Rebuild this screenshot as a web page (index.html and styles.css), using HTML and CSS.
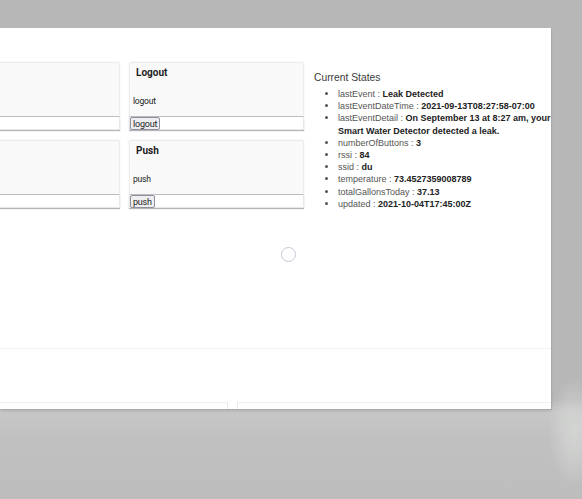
FILE: index.html
```html
<!DOCTYPE html>
<html>
<head>
<meta charset="utf-8">
<link rel="stylesheet" href="styles.css">
</head>
<body>
<div class="backdrop">
  <div class="panel">
    <div class="main">
      <div class="cards">
        <div class="card">
          <div class="card-head"><div class="card-title">&nbsp;</div><div class="card-cmd">&nbsp;</div></div>
          <div class="card-input"></div>
        </div>
        <div class="card">
          <div class="card-head"><div class="card-title">Logout</div><div class="card-cmd">logout</div></div>
          <div class="card-input"><button class="btn">logout</button></div>
        </div>
        <div class="card">
          <div class="card-head"><div class="card-title">&nbsp;</div><div class="card-cmd">&nbsp;</div></div>
          <div class="card-input"></div>
        </div>
        <div class="card">
          <div class="card-head"><div class="card-title">Push</div><div class="card-cmd">push</div></div>
          <div class="card-input"><button class="btn">push</button></div>
        </div>
      </div>
      <div class="states">
        <div class="states-title">Current States</div>
        <ul class="state-list">
          <li>lastEvent : <b>Leak Detected</b></li>
          <li>lastEventDateTime : <b>2021-09-13T08:27:58-07:00</b></li>
          <li>lastEventDetail : <b>On September 13 at 8:27 am, your Smart Water Detector detected a leak.</b></li>
          <li>numberOfButtons : <b>3</b></li>
          <li>rssi : <b>84</b></li>
          <li>ssid : <b>du</b></li>
          <li>temperature : <b>73.4527359008789</b></li>
          <li>totalGallonsToday : <b>37.13</b></li>
          <li>updated : <b>2021-10-04T17:45:00Z</b></li>
        </ul>
      </div>
    </div>
    <div class="spinner-row"><div class="spinner"></div></div>
    <div class="section">
      <div class="section-cards">
        <div class="section-card"></div>
        <div class="section-card"></div>
      </div>
    </div>
  </div>
</div>
</body>
</html>
```

FILE: styles.css
```css
html, body {
  margin: 0;
  padding: 0;
}
body {
  width: 582px;
  height: 499px;
  overflow: hidden;
  background: #b8b9b8;
  font-family: "Liberation Sans", Arial, sans-serif;
}
.backdrop {
  height: 499px;
  padding-top: 28px;
  box-sizing: border-box;
  background:
    radial-gradient(ellipse 26px 55px at 574px 432px, rgba(214,216,214,0.85) 0%, rgba(214,216,214,0.5) 50%, rgba(214,216,214,0) 100%),
    linear-gradient(#b6b7b6 0px, #b6b7b6 400px, #c6c7c6 412px, #bfc0bf 440px, #bcbdbc 499px);
}
.panel {
  width: 551px;
  height: 381px;
  background: #ffffff;
  box-shadow: 1px 1px 0 #a9aaa9, 0 2px 3px rgba(0,0,0,0.12);
  display: flex;
  flex-direction: column;
  overflow: hidden;
}
.main {
  display: flex;
  padding-top: 34px;
  height: 175px;
  box-sizing: border-box;
}
.cards {
  display: grid;
  grid-template-columns: 175px 175px;
  column-gap: 9px;
  row-gap: 9px;
  margin-left: -55px;
  width: 359px;
  flex: none;
  align-content: start;
}
.card {
  height: 69px;
  display: flex;
  flex-direction: column;
}
.card-head {
  height: 55px;
  background: #f9f9f9;
  border: 1px solid #ececec;
  border-bottom: 1px solid #bdbdbd;
  box-sizing: border-box;
  border-radius: 2px 2px 0 0;
  font-family: Roboto, "Liberation Sans", sans-serif;
  color: #222;
  box-shadow: 0 0 2px rgba(0,0,0,0.08);
}
.card-title {
  font-weight: bold;
  font-size: 10px;
  padding: 4px 0 0 6px;
  height: 24px;
  box-sizing: border-box;
}
.card-cmd {
  font-size: 8.5px;
  padding: 9px 0 0 3px;
  letter-spacing: -0.2px;
}
.card-input {
  height: 13px;
  background: #fff;
  border: 1px solid #e8e8e8;
  border-top: none;
  box-sizing: border-box;
  box-shadow: 0 1px 1px #b5b5b5;
  display: flex;
  align-items: stretch;
}
.btn {
  margin: 0;
  padding: 0 2px;
  font-family: Roboto, "Liberation Sans", sans-serif;
  font-size: 9px;
  letter-spacing: -0.2px;
  color: #222;
  background: #efeff1;
  border: 1px solid #8f8f9d;
  border-radius: 2px;
  height: 13px;
  line-height: 10px;
}
.states {
  margin-left: 10px;
  padding-top: 10px;
  color: #333;
  font-size: 9px;
  flex: 1;
  min-width: 0;
}
.states-title {
  font-size: 10.3px;
  color: #3a3a3a;
  line-height: 12px;
}
.state-list {
  margin: 4px 0 0 0;
  padding-left: 24px;
  line-height: 12.2px;
  color: #555;
}
.state-list li::marker {
  font-size: 10px;
}
.state-list b {
  color: #222;
  font-weight: bold;
}
.spinner-row {
  height: 145px;
  display: flex;
  justify-content: center;
  padding-left: 25px;
}
.spinner {
  margin-top: 44px;
  width: 13px;
  height: 13px;
  border: 1px solid #c6c6d4;
  border-radius: 50%;
}
.section {
  flex: 1;
  border-top: 1px solid #f1f1f1;
  display: flex;
  flex-direction: column;
  justify-content: flex-end;
}
.section-cards {
  display: flex;
  gap: 9px;
  height: 7px;
}
.section-card {
  border-top: 1px solid #f0f0f0;
  border-right: 1px solid #e8e8e8;
}
.section-card:first-child {
  width: 227px;
}
.section-card:last-child {
  flex: 1;
  border-left: 1px solid #e8e8e8;
  border-right: none;
}
```
